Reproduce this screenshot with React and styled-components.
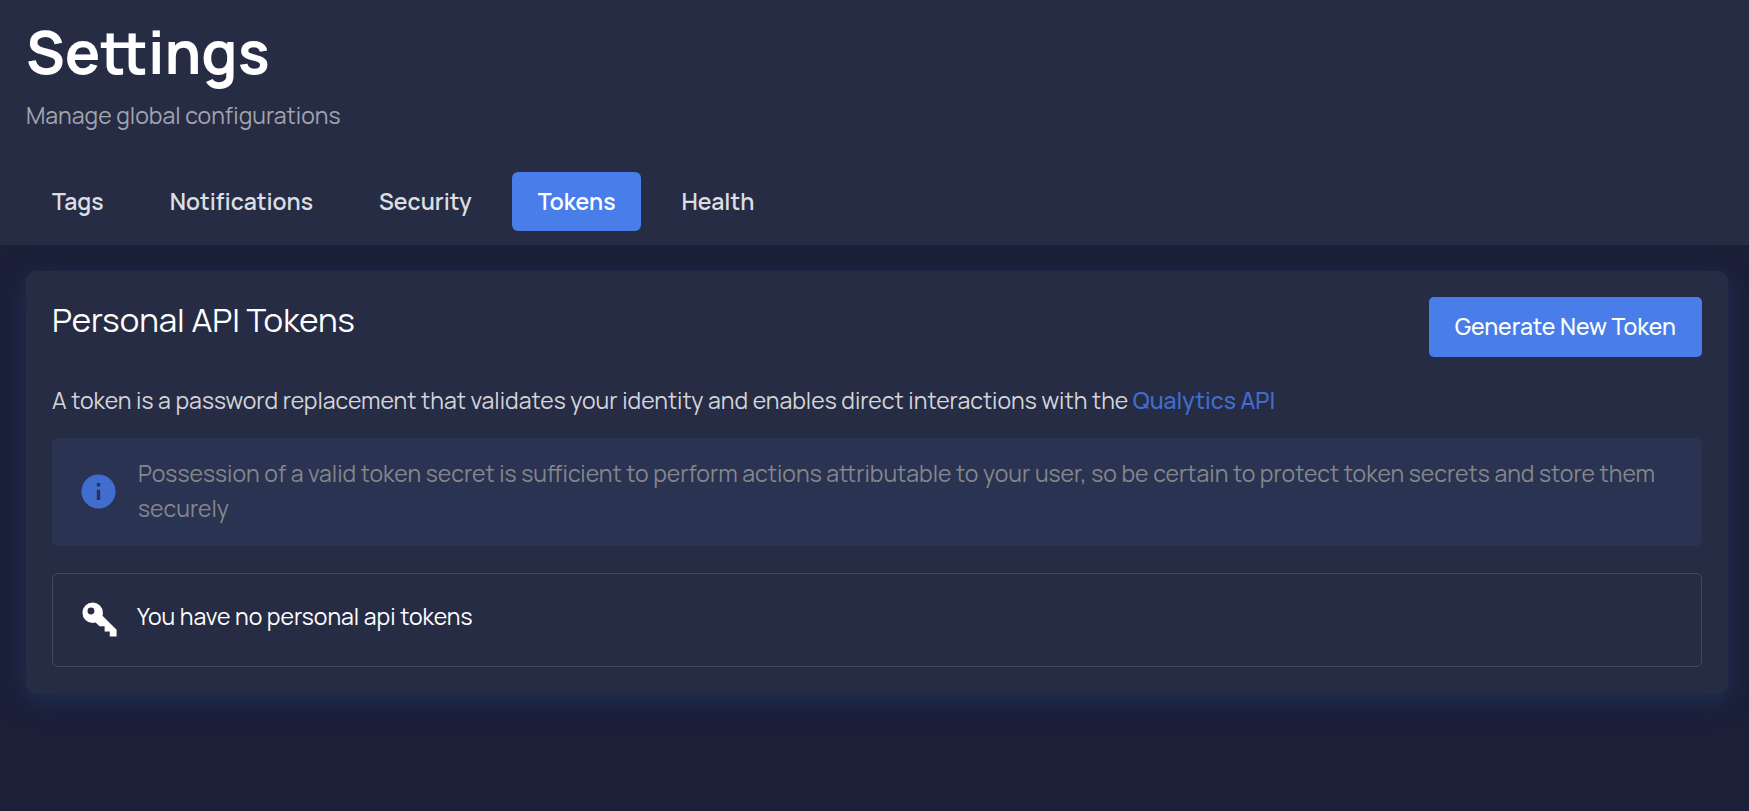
import React from "react";
import styled, { createGlobalStyle } from "styled-components";

const GlobalStyle = createGlobalStyle`
  * { box-sizing: border-box; }
  body {
    margin: 0;
    min-height: 100vh;
    background: #1b1f38;
    color: #fff;
    font-family: Manrope, Inter, "Liberation Sans", sans-serif;
    font-size: 23px;
    line-height: 36px;
  }
`;

const Header = styled.header`
  padding: 19px 26px 14px;
  background: #272c45;
`;

const PageTitle = styled.h1`
  margin: 0;
  font-size: 59px;
  line-height: 66px;
  font-weight: 700;
`;

const Subtitle = styled.p`
  margin: 12px 0 39px;
  color: #a2a4af;
`;

const Tabs = styled.nav`
  display: flex;
  flex-wrap: wrap;
  gap: 14px;
`;

const Tab = styled.button`
  height: 59px;
  padding: 0 26px 2px;
  border: 0;
  border-radius: 6px;
  background: ${(p) => (p.$active ? "#487dea" : "transparent")};
  color: ${(p) => (p.$active ? "#fff" : "#dddee2")};
  font: inherit;
  font-weight: 600;
  cursor: pointer;
`;

const Card = styled.main`
  margin: 26px 21px 26px 26px;
  padding: 26px 26px 27px;
  border-radius: 10px;
  background: #272c45;
  box-shadow: 0 6px 24px rgba(38, 66, 116, 0.5);
`;

const CardHeader = styled.div`
  display: flex;
  justify-content: space-between;
  align-items: flex-start;
`;

const CardTitle = styled.h2`
  margin: 0;
  font-size: 33px;
  line-height: 46px;
  font-weight: 400;
`;

const PrimaryButton = styled.button`
  height: 60px;
  padding: 0 26px 2px;
  border: 0;
  border-radius: 5px;
  background: #487dea;
  color: #fff;
  font: inherit;
  font-weight: 500;
  cursor: pointer;
`;

const Description = styled.p`
  margin: 25px 0 20px;
  color: #d4d5da;
`;

const DocsLink = styled.a`
  color: #416dce;
  font-weight: 500;
  text-decoration: none;
`;

const Notice = styled.div`
  display: flex;
  align-items: center;
  gap: 19px;
  padding: 18px 26px 20px;
  border: 0;
  border-radius: 6px;
  background: #2a3351;
  color: #85868c;
  line-height: 35px;

  p { margin: 0; }
`;

const EmptyState = styled(Notice)`
  align-items: flex-start;
  gap: 17px;
  margin-top: 27px;
  padding: 25px 26px 26px;
  border: 1px solid #44485c;
  background: transparent;
  color: #fff;
`;

const Icon = styled.svg`
  flex: none;
  width: 41px;
  height: 41px;
  fill: ${(p) => p.$color};
`;

const tabs = ["Tags", "Notifications", "Security", "Tokens", "Health"];

export default function App() {
  return (
    <>
      <GlobalStyle />
      <Header>
        <PageTitle>Settings</PageTitle>
        <Subtitle>Manage global configurations</Subtitle>
        <Tabs aria-label="Settings sections">
          {tabs.map((name) => (
            <Tab key={name} type="button" $active={name === "Tokens"}>
              {name}
            </Tab>
          ))}
        </Tabs>
      </Header>
      <Card>
        <CardHeader>
          <CardTitle>Personal API Tokens</CardTitle>
          <PrimaryButton type="button">Generate New Token</PrimaryButton>
        </CardHeader>
        <Description>
          A token is a password replacement that validates your identity and
          enables direct interactions with the{" "}
          <DocsLink href="#api">Qualytics API</DocsLink>
        </Description>
        <Notice>
          <Icon viewBox="0 0 24 24" $color="#416dce" aria-hidden="true">
            <path d="M13,9H11V7H13M13,17H11V11H13M12,2A10,10 0 0,0 2,12A10,10 0 0,0 12,22A10,10 0 0,0 22,12A10,10 0 0,0 12,2Z" />
          </Icon>
          <p>
            Possession of a valid token secret is sufficient to perform actions
            attributable to your user, so be certain to protect token secrets
            and store them securely
          </p>
        </Notice>
        <EmptyState>
          <Icon viewBox="0 0 24 24" $color="#fff" aria-hidden="true">
            <path d="M22,19V22H18V19H15V16H12L9.74,13.74C9.19,13.91 8.61,14 8,14A6,6 0 0,1 2,8A6,6 0 0,1 8,2A6,6 0 0,1 14,8C14,8.61 13.91,9.19 13.74,9.74L22,18V19M7,5A2,2 0 0,0 5,7A2,2 0 0,0 7,9A2,2 0 0,0 9,7A2,2 0 0,0 7,5Z" />
          </Icon>
          <p>You have no personal api tokens</p>
        </EmptyState>
      </Card>
    </>
  );
}
